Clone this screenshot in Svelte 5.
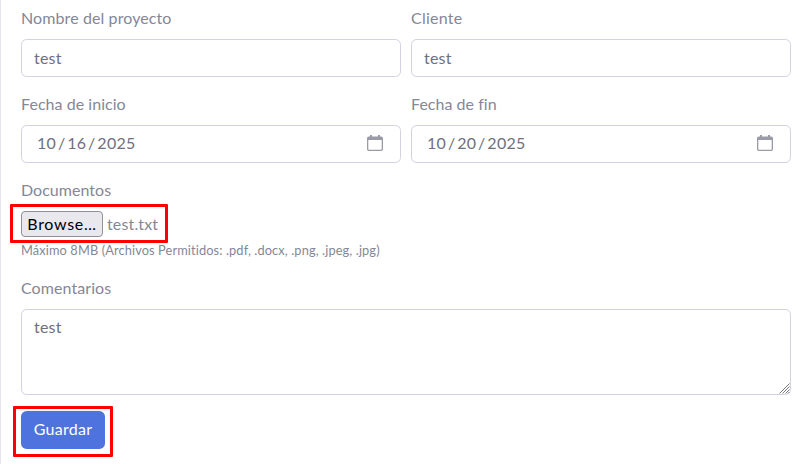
<script>
  let name = $state('test');
  let client = $state('test');
  let comments = $state('test');
</script>

{#snippet dateField(label, month, day, year)}
  <div class="group">
    <div class="label"><span class={label === 'Fecha de fin' ? 'fin' : 'inicio'}>{label}</span></div>
    <div class="control date">
      <span class="parts"><span>{month}</span><i>/</i><span>{day}</span><i>/</i><span>{year}</span></span>
      <svg width="16" height="16" viewBox="0 0 16 16" aria-hidden="true">
        <path fill="#9a9ba7" fill-rule="evenodd" d="M3 0h2v1.5h6V0h2v1.5h1.2A1.8 1.8 0 0 1 16 3.3v10.9a1.8 1.8 0 0 1-1.8 1.8H1.8A1.8 1.8 0 0 1 0 14.2V3.3a1.8 1.8 0 0 1 1.8-1.8H3zM1.3 5v9.1q0 .7.7.7h12q.7 0 .7-.7V5z" />
      </svg>
    </div>
  </div>
{/snippet}

<form class="panel" onsubmit={(e) => e.preventDefault()}>
  <div class="row">
    <div class="group">
      <label class="label" for="name"><span class="nombre">Nombre del proyecto</span></label>
      <input id="name" class="control" bind:value={name} />
    </div>
    <div class="group">
      <label class="label" for="client"><span class="cliente">Cliente</span></label>
      <input id="client" class="control" bind:value={client} />
    </div>
  </div>
  <div class="row">
    {@render dateField('Fecha de inicio', '10', '16', '2025')}
    {@render dateField('Fecha de fin', '10', '20', '2025')}
  </div>
  <div class="docs">
    <div class="label"><span class="documentos">Documentos</span></div>
    <div class="file">
      <button type="button" class="browse">Browse…</button>
      <span class="filename">test.txt</span>
      <div class="mark file-mark"></div>
    </div>
    <div class="hint"><span>Máximo 8MB (Archivos Permitidos: .pdf, .docx, .png, .jpeg, .jpg)</span></div>
  </div>
  <div class="comments">
    <label class="label" for="comments"><span class="comentarios">Comentarios</span></label>
    <div class="area">
      <textarea id="comments" class="control" bind:value={comments}></textarea>
      <svg class="grip" width="11" height="11" viewBox="0 0 11 11" aria-hidden="true">
        <path d="M.5 10.5l10-10M3.5 10.5l7-7M6.5 10.5l4-4M9 10.5l1.5-1.5" stroke="#777" stroke-width="1" />
      </svg>
    </div>
  </div>
  <div class="actions">
    <button class="save">Guardar</button>
    <div class="mark save-mark"></div>
  </div>
</form>

<style>
  :global(body) { background: #fff; overflow: hidden; }
  .panel {
    box-sizing: border-box;
    height: 464px;
    padding: 7px 18px 0 20px;
    border-left: 1px solid #e3e6f0;
    font-family: Lato, "Noto Sans", sans-serif;
    font-size: 16px;
    line-height: 24px;
    color: #858796;
  }
  .row { display: grid; grid-template-columns: 1fr 1fr; gap: 10px; margin-bottom: 16px; }
  .label { display: block; height: 24px; margin-bottom: 8px; line-height: 22px; white-space: nowrap; }
  .nombre { letter-spacing: 0.1px; }
  .cliente { letter-spacing: 0.25px; }
  .inicio { letter-spacing: 0.04px; }
  .fin { letter-spacing: 0.03px; }
  .documentos { letter-spacing: 0.03px; }
  .comentarios { letter-spacing: 0.08px; }
  .control {
    box-sizing: border-box;
    display: block;
    width: 100%;
    height: 38px;
    margin: 0;
    padding: 5px 12px 7px;
    border: 1px solid #d1d3e2;
    border-radius: 5.6px;
    background: #fff;
    color: #6e707e;
    font: inherit;
    letter-spacing: 0.2px;
    outline: none;
  }
  .date { display: flex; align-items: center; justify-content: space-between; padding: 0 17px 0 15px; }
  .date svg { margin-bottom: 2px; }
  .parts { display: flex; padding-bottom: 2px; letter-spacing: 0.3px; }
  .parts i { width: 11px; text-align: center; font-style: normal; }
  .docs { height: 98px; }
  .file { position: relative; display: flex; align-items: center; height: 26px; }
  .browse {
    box-sizing: border-box;
    width: 82px;
    height: 26px;
    padding: 0;
    border: 1px solid #8f8f9d;
    border-radius: 4px;
    background: #e9e9ed;
    color: #000;
    font: inherit;
    letter-spacing: 0.7px;
    line-height: 24px;
  }
  .filename { margin-left: 4px; letter-spacing: 0.15px; }
  .hint { height: 24px; padding-top: 1px; font-size: 12.8px; line-height: 24px; white-space: nowrap; letter-spacing: 0.115px; }
  .area { position: relative; }
  textarea.control { height: 86px; resize: none; }
  .grip { position: absolute; right: 1px; bottom: 1px; fill: none; }
  .actions { position: relative; margin-top: 16px; }
  .save {
    display: block;
    width: 84px;
    height: 38px;
    padding: 0 0 2px;
    border: 0;
    border-radius: 5.6px;
    background: #4e73df;
    color: #fff;
    font: inherit;
    letter-spacing: 0.25px;
  }
  .mark { position: absolute; box-sizing: border-box; border: 3px solid #f00; border-radius: 1px; pointer-events: none; }
  .file-mark { left: -11px; top: -7px; width: 158px; height: 39px; }
  .save-mark { left: -8px; top: -5px; width: 100px; height: 51px; }
</style>
